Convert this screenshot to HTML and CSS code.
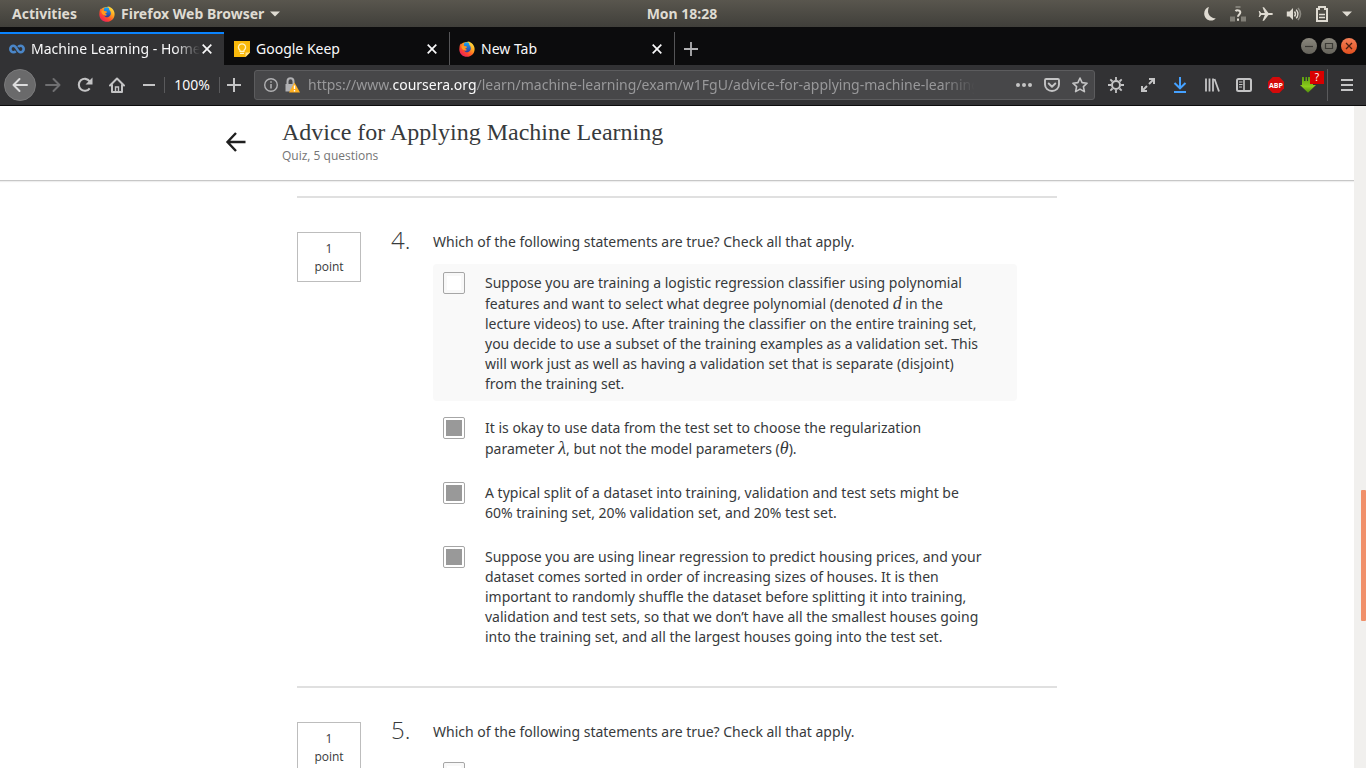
FILE: index.html
```html
<!DOCTYPE html>
<html lang="en">
<head>
<meta charset="utf-8">
<title>Machine Learning - Home</title>
<link rel="stylesheet" href="styles.css">
</head>
<body>
<svg class="defs" aria-hidden="true">
  <defs>
    <linearGradient id="fox-body" x1="0.9" y1="0" x2="0.1" y2="1">
      <stop offset="0" stop-color="#fff14d"/><stop offset="0.35" stop-color="#ffa51f"/><stop offset="0.65" stop-color="#ff4a2a"/><stop offset="1" stop-color="#e3126f"/>
    </linearGradient>
    <linearGradient id="fox-globe" x1="0" y1="0" x2="0" y2="1">
      <stop offset="0" stop-color="#18a8f5"/><stop offset="1" stop-color="#2c3b9e"/>
    </linearGradient>
    <linearGradient id="green" x1="0" y1="0" x2="0" y2="1">
      <stop offset="0" stop-color="#5c9c10"/><stop offset="0.6" stop-color="#8ccc1c"/><stop offset="1" stop-color="#4e8a0c"/>
    </linearGradient>
    <symbol id="firefox" viewBox="0 0 16 16">
      <path fill="url(#fox-body)" d="M.5 6C.7 4.300 1.300 3 2.200 2.200L2.500 3.200C3.200 2.200 4 1.700 5 1.500L10 0.600C10.600 1.200 12.600 1.700 13.800 3.200C15 4.700 15.700 6.500 15.600 8.500C15.400 12.700 12.100 15.800 8 15.800C3.800 15.800 .4 12.600 .3 8.400Z"/>
      <path fill="url(#fox-globe)" d="M5.200 2.200C7 .9 9 1.200 10 2.200C9.900 3.600 10.800 4.200 11.500 5.500C12.500 8 11.500 10.500 9 11.200C7 11.500 5.500 10.500 5 9.200C6 9.800 7.200 9.500 8 8.700C7 8.700 6.300 8 6.200 7.200L8 6.200C7.200 5.400 6.500 5 5.300 5.200C4.800 4 4.700 3 5.200 2.200Z"/>
      <path fill="#ff9a1f" d="M2.500 4.500C4 4.200 5 4.600 5.800 5.200L8 5.800C8 6.700 6.500 6.800 6.200 7.400C6.200 8.300 7.200 8.700 8 8.700C7 10 5.500 9.500 4.600 9C3 8 2 6.500 2.500 4.500Z"/>
    </symbol>
    <symbol id="close" viewBox="0 0 10 10"><path d="M.7 .7L9.300 9.300M9.300 .7L.7 9.300" stroke="currentColor" stroke-width="1.700" fill="none"/></symbol>
  </defs>
</svg>

<div class="desktop">
  <header class="panel">
    <div class="panel-left">
      <button class="panel-item">Activities</button>
      <button class="panel-item panel-app">
        <svg class="icon16"><use href="#firefox"/></svg>Firefox Web Browser
        <svg class="caret" viewBox="0 0 10 6"><path d="M0 .5h10L5 5.500z" fill="currentColor"/></svg>
      </button>
    </div>
    <time class="clock">Mon 18:28</time>
    <div class="panel-right">
      <svg class="icon16" viewBox="0 0 16 16"><path d="M7 1C4.200 1.700 2.200 4.200 2.200 7.500C2.200 11.600 5.200 14.600 9 14.600C11 14.600 12.700 13.700 13.700 12.300C9.500 12.400 6.200 9 6 5.500C6 3.700 6.300 2.200 7 1Z" fill="#dfdbd2"/></svg>
      <svg class="icon16" viewBox="0 0 16 16"><path d="M5.500 0h5v2h-5zM0 10.500h5v5H0zM11 10.500h5v5h-5z" fill="#817f77"/><path d="M5.500 5.200C6.500 3.900 10.400 4 10.300 6.500C10.300 8.500 8 8.400 8 10.800M8 12.500v2.200" stroke="#dfdbd2" stroke-width="2" fill="none"/></svg>
      <svg class="icon16" viewBox="0 0 16 16"><path d="M15 8C15 7.200 14 6.900 13 6.900H10.500L6 1.300H4.500L6.800 6.900H3.200L1.700 5H.7L1.500 8L.7 11H1.700L3.200 9.100H6.800L4.500 14.700H6L10.500 9.100H13C14 9.100 15 8.800 15 8Z" fill="#dfdbd2"/></svg>
      <svg class="icon16" viewBox="0 0 16 16"><path d="M.8 5.500h2.700L7 2v12l-3.500-3.500H.8z" fill="#dfdbd2"/><path d="M8.500 5.500q2 2.500 0 5M10.200 3.600q3.500 4.400 0 8.800" stroke="#dfdbd2" stroke-width="1.400" fill="none"/><path d="M12 2q5 6 0 12" stroke="#8a8880" stroke-width="1.600" fill="none"/></svg>
      <svg class="icon16" viewBox="0 0 16 16"><path d="M3 3h2V1h6v2h2v12H3z" stroke="#dfdbd2" stroke-width="2" fill="none"/><path d="M5 8.500h6M5 11.500h6" stroke="#dfdbd2" stroke-width="1.600"/></svg>
      <svg class="caret" viewBox="0 0 10 6"><path d="M0 .5h10L5 5.500z" fill="currentColor"/></svg>
    </div>
  </header>

  <nav class="tabs">
    <div class="tab tab-active">
      <svg class="icon16" viewBox="0 0 16 16"><path d="M6.800 10.300C6 11 5.200 11.200 4.500 11.200A3.200 3.200 0 0 1 4.500 4.800C8 4.800 8 11.200 11.500 11.200A3.200 3.200 0 1 0 11.500 4.800C10.400 4.800 9.700 5.300 9.200 6" stroke="#4a86c8" stroke-width="2.600" fill="none"/></svg>
      <span class="tab-title tab-fade">Machine Learning - Home</span>
      <button class="tab-close" aria-label="Close tab"><svg class="icon10"><use href="#close"/></svg></button>
    </div>
    <div class="tab tab-sep">
      <svg class="icon16" viewBox="0 0 16 16"><path d="M0 0h16v11.500L11.500 16H0z" fill="#f9b90b"/><path d="M16 11.500h-4.500V16z" fill="#fde08a"/><path d="M6 10.300V9.200C3 7 4.600 2.800 8 2.800S13 7 10 9.200v1.100zM6 12.300h4" stroke="#fff3c4" stroke-width="1.200" fill="none"/></svg>
      <span class="tab-title">Google Keep</span>
      <button class="tab-close" aria-label="Close tab"><svg class="icon10"><use href="#close"/></svg></button>
    </div>
    <div class="tab tab-sep">
      <svg class="icon16"><use href="#firefox"/></svg>
      <span class="tab-title">New Tab</span>
      <button class="tab-close" aria-label="Close tab"><svg class="icon10"><use href="#close"/></svg></button>
    </div>
    <button class="new-tab" aria-label="New tab"><svg class="icon14" viewBox="0 0 14 14"><path d="M7 0v14M0 7h14" stroke="currentColor" stroke-width="1.800"/></svg></button>
    <div class="window-buttons">
      <button class="win" aria-label="Minimize"><svg viewBox="0 0 16 16"><path d="M4 8.500h8" stroke="#3a3934" stroke-width="1.200"/></svg></button>
      <button class="win" aria-label="Maximize"><svg viewBox="0 0 16 16"><path d="M4.500 5.500h7v5h-7z" stroke="#3a3934" stroke-width="1.200" fill="none"/></svg></button>
      <button class="win win-close" aria-label="Close"><svg viewBox="0 0 16 16"><path d="M5 5l6 6M11 5l-6 6" stroke="#4a2012" stroke-width="1.300"/></svg></button>
    </div>
  </nav>

  <div class="toolbar">
    <button class="tool tool-back" aria-label="Back"><svg class="icon16" viewBox="0 0 16 16"><path d="M15 8H1.500M7.500 2L1.500 8l6 6" stroke="currentColor" stroke-width="2" fill="none" stroke-linecap="round" stroke-linejoin="round"/></svg></button>
    <button class="tool tool-dim" aria-label="Forward"><svg class="icon16" viewBox="0 0 16 16"><path d="M1 8h13.500M8.500 2l6 6l-6 6" stroke="currentColor" stroke-width="2" fill="none" stroke-linecap="round" stroke-linejoin="round"/></svg></button>
    <button class="tool" aria-label="Reload"><svg class="icon16" viewBox="0 0 16 16"><path d="M12.700 11.300A6 6 0 1 1 12.700 4.300" stroke="currentColor" stroke-width="2.100" fill="none"/><path d="M15.500 .5v7H8.500z" fill="currentColor"/></svg></button>
    <button class="tool" aria-label="Home"><svg class="icon16" viewBox="0 0 16 16"><path d="M1 8.500L8 1.500l7 7M3 7.500V15h10V7.500" stroke="currentColor" stroke-width="2" fill="none" stroke-linecap="round" stroke-linejoin="round"/><path d="M6.500 15v-5h3v5" stroke="currentColor" stroke-width="1.400" fill="none"/></svg></button>
    <div class="zoom">
      <button class="zoom-btn" aria-label="Zoom out"><svg class="icon14" viewBox="0 0 14 14"><path d="M1 7h12" stroke="currentColor" stroke-width="2"/></svg></button>
      <button class="zoom-value">100%</button>
      <button class="zoom-btn zoom-in" aria-label="Zoom in"><svg class="icon14" viewBox="0 0 14 14"><path d="M7 0v14M0 7h14" stroke="currentColor" stroke-width="2"/></svg></button>
    </div>
    <div class="urlbar">
      <svg class="icon16" viewBox="0 0 16 16"><circle cx="8" cy="8" r="6.300" stroke="#b1b1b3" stroke-width="1.400" fill="none"/><path d="M8 7v4.500M8 4.300v1.500" stroke="#b1b1b3" stroke-width="1.500"/></svg>
      <svg class="icon16" viewBox="0 0 16 16"><path d="M3.500 7V4.500C3.500 0.300 9.500 0.300 9.500 4.500V7" stroke="#b1b1b3" stroke-width="2" fill="none"/><path d="M1.500 7h9v7.500h-9z" fill="#b1b1b3"/><path d="M10.500 5.500L16 15.500H5z" fill="#ffb01f"/><path d="M10.500 8.500v3.500M10.500 13v1.500" stroke="#fff" stroke-width="1.400"/></svg>
      <span class="url">https://www.<b>coursera.org</b>/learn/machine-learning/exam/w1FgU/advice-for-applying-machine-learning</span>
      <button class="url-btn" aria-label="Page actions"><svg class="icon16" viewBox="0 0 16 16"><g fill="currentColor"><circle cx="2" cy="8" r="2"/><circle cx="8" cy="8" r="2"/><circle cx="14" cy="8" r="2"/></g></svg></button>
      <button class="url-btn" aria-label="Save to Pocket"><svg class="icon16" viewBox="0 0 16 16"><path d="M2.200 2h11.600Q15 2 15 3.200V7.500A7 6.500 0 0 1 1 7.500V3.200Q1 2 2.200 2zM4.700 6.500L8 9.700l3.300-3.200" stroke="currentColor" stroke-width="1.900" fill="none" stroke-linecap="round" stroke-linejoin="round"/></svg></button>
      <button class="url-btn" aria-label="Bookmark"><svg class="icon16" viewBox="0 0 16 16"><path d="M8 1l2.100 4.600 5 .6-3.700 3.400 1 5L8 12.100 3.600 14.600l1-5L.9 6.200l5-.6z" stroke="currentColor" stroke-width="1.600" fill="none" stroke-linejoin="round"/></svg></button>
    </div>
    <div class="tools-right">
      <button class="tool" aria-label="Settings"><svg class="icon16" viewBox="0 0 16 16"><circle cx="8" cy="8" r="4" stroke="currentColor" stroke-width="2" fill="none"/><path d="M8 0v3M8 13v3M0 8h3M13 8h3M2.300 2.300l2.200 2.200M11.500 11.500l2.200 2.200M13.700 2.300l-2.200 2.200M4.500 11.500l-2.200 2.200" stroke="currentColor" stroke-width="1.800"/></svg></button>
      <button class="tool" aria-label="Fullscreen"><svg class="icon16" viewBox="0 0 16 16"><path d="M9 2h5v5M14 2L9 7M7 14H2V9M2 14l5-5" stroke="currentColor" stroke-width="2" fill="none"/></svg></button>
      <button class="tool tool-blue" aria-label="Downloads"><svg class="icon16" viewBox="0 0 16 16"><path d="M8 0v11M2.500 6L8 11.300L13.500 6M2 15h12" stroke="currentColor" stroke-width="2" fill="none"/></svg></button>
      <button class="tool" aria-label="Library"><svg class="icon16" viewBox="0 0 16 16"><path d="M2 1.500v13M5.500 1.500v13M9 1.500v13M10.500 2l4.500 12.500" stroke="currentColor" stroke-width="1.800"/></svg></button>
      <button class="tool" aria-label="Sidebars"><svg class="icon16" viewBox="0 0 16 16"><rect x="1" y="2" width="14" height="12" rx="1.500" stroke="currentColor" stroke-width="2" fill="none"/><path d="M8 2v12" stroke="currentColor" stroke-width="1.600"/><path d="M3 5h3.500M3 7.500h3.500M3 10h3" stroke="currentColor" stroke-width="1"/></svg></button>
      <button class="tool" aria-label="Adblock Plus"><svg class="icon16" viewBox="0 0 16 16"><path d="M4.700 0h6.600L16 4.700v6.600L11.300 16H4.700L0 11.300V4.700z" fill="#d40a0a"/><text class="abp" x="8" y="11" text-anchor="middle">ABP</text></svg></button>
      <button class="tool tool-badged" aria-label="Video downloader"><svg class="icon16" viewBox="0 0 16 16"><path d="M2 0h2v4h1.500V0H7v4h1V0h5v8h3L8 15.800L0 8h2z" fill="url(#green)"/></svg><span class="badge">?</span></button>
    </div>
    <button class="tool tool-menu" aria-label="Open menu"><svg class="icon14" viewBox="0 0 14 14"><path d="M1 2h12M1 7h12M1 12h12" stroke="currentColor" stroke-width="2"/></svg></button>
  </div>

  <div class="viewport">
    <div class="page">
      <header class="quiz-header">
        <button class="quiz-back" aria-label="Back to course"><svg viewBox="0 0 22 22"><path d="M20.500 11H3M11 2L2.500 11L11 20" stroke="#1f1f1f" stroke-width="2.400" fill="none"/></svg></button>
        <div>
          <h1 class="quiz-title">Advice for Applying Machine Learning</h1>
          <p class="quiz-meta">Quiz, 5 questions</p>
        </div>
      </header>
      <main class="questions">
        <section class="question">
          <div class="points">1<br>point</div>
          <div class="number">4.</div>
          <div class="question-body">
            <p class="prompt">Which of the following statements are true? Check all that apply.</p>
            <label class="option option-hover"><input class="check" type="checkbox"><span class="option-text">Suppose you are training a logistic regression classifier using polynomial features and want to select what degree polynomial (denoted <i class="math">d</i> in the lecture videos) to use. After training the classifier on the entire training set, you decide to use a subset of the training examples as a validation set. This will work just as well as having a validation set that is separate (disjoint) from the training set.</span></label>
            <label class="option"><input class="check" type="checkbox" checked><span class="option-text">It is okay to use data from the test set to choose the regularization parameter <i class="math">λ</i>, but not the model parameters (<i class="math">θ</i>).</span></label>
            <label class="option"><input class="check" type="checkbox" checked><span class="option-text">A typical split of a dataset into training, validation and test sets might be 60% training set, 20% validation set, and 20% test set.</span></label>
            <label class="option"><input class="check" type="checkbox" checked><span class="option-text">Suppose you are using linear regression to predict housing prices, and your dataset comes sorted in order of increasing sizes of houses. It is then important to randomly shuffle the dataset before splitting it into training, validation and test sets, so that we don’t have all the smallest houses going into the training set, and all the largest houses going into the test set.</span></label>
          </div>
        </section>
        <section class="question">
          <div class="points">1<br>point</div>
          <div class="number">5.</div>
          <div class="question-body">
            <p class="prompt">Which of the following statements are true? Check all that apply.</p>
            <label class="option"><input class="check" type="checkbox" aria-label="First answer"></label>
          </div>
        </section>
      </main>
    </div>
    <div class="scrollbar"><div class="thumb"></div></div>
  </div>
</div>
</body>
</html>
```

FILE: styles.css
```css
* { box-sizing: border-box; }

body {
  margin: 0;
  font-family: "Open Sans", sans-serif;
  font-size: 14px;
  line-height: 20px;
  color: #373a3c;
}

button {
  display: flex;
  align-items: center;
  justify-content: center;
  margin: 0;
  padding: 0;
  border: 0;
  background: none;
  color: inherit;
  font: inherit;
}

svg { display: block; flex: none; }
.defs { position: absolute; width: 0; height: 0; }
.icon16 { width: 16px; height: 16px; }
.icon14 { width: 14px; height: 14px; }
.icon10 { width: 10px; height: 10px; }
.caret { width: 10px; height: 6px; }

.desktop {
  display: flex;
  flex-direction: column;
  height: 100vh;
  overflow: hidden;
}

/* Desktop panel */
.panel {
  display: grid;
  grid-template-columns: 1fr auto 1fr;
  align-items: center;
  flex: none;
  height: 27px;
  padding: 0 14px 0 12px;
  background: linear-gradient(#59564e, #403f3a);
  color: #dfdbd2;
  font-family: "Noto Sans", sans-serif;
  font-weight: 700;
}
.panel-left { display: flex; gap: 22px; }
.panel-app { gap: 6px; }
.panel-right { display: flex; align-items: center; justify-content: flex-end; gap: 12px; }

/* Tab strip */
.tabs {
  display: flex;
  flex: none;
  height: 38px;
  padding-top: 5px;
  background: #0c0c0d;
  color: #f9f9fa;
  font-family: "Noto Sans", sans-serif;
}
.tab {
  display: flex;
  align-items: center;
  gap: 6px;
  width: 225px;
  padding: 0 12px 0 9px;
}
.tab-active { width: 224px; margin-right: 1px; border-top: 2px solid #0a84ff; background: #323234; padding-bottom: 2px; }
.tab-sep { border-right: 1px solid #555557; }
.tab-title { flex: 1; overflow: hidden; white-space: nowrap; }
.tab-fade { margin-right: -4px; mask-image: linear-gradient(to right, #000 85%, transparent); }
.new-tab { width: 32px; color: #b1b1b3; }
.window-buttons { display: flex; align-items: center; gap: 4px; margin-left: auto; padding: 0 9px 5px 0; }
.win {
  width: 16px;
  height: 16px;
  border-radius: 50%;
  background: linear-gradient(#8a877d, #65635b);
}
.win svg { width: 16px; height: 16px; }
.win-close { background: linear-gradient(#f58057, #e2501f); }

/* Navigation toolbar */
.toolbar {
  display: flex;
  align-items: center;
  flex: none;
  height: 41px;
  padding: 0 3px 0 4px;
  border-bottom: 1px solid #0c0c0d;
  background: #323234;
  color: #c4c4c5;
  font-family: "Noto Sans", sans-serif;
}
.tool { width: 32px; height: 32px; }
.tool-back { margin-right: 1px; border: 1px solid #7a7a7b; border-radius: 50%; background: #6a6a6b; color: #dcdcdd; }
.tool-dim { color: #6f6f71; }
.tool-blue { color: #45a1ff; }
.zoom { display: flex; align-items: center; }
.zoom-btn { width: 31px; height: 32px; }
.zoom-in { width: 27px; }
.zoom-value {
  width: 56px;
  height: 16px;
  border: solid #5a5a5c;
  border-width: 0 1px;
  color: #f9f9fa;
}
.urlbar {
  display: flex;
  align-items: center;
  gap: 5px;
  flex: 1;
  min-width: 0;
  height: 30px;
  margin: 0 5px 0 7px;
  padding: 0 3px 0 8px;
  border: 1px solid #5c5c5e;
  border-radius: 3px;
  background: #474749;
  color: #c4c4c5;
}
.url {
  flex: 1;
  overflow: hidden;
  margin: 0 32px 0 3px;
  white-space: nowrap;
  color: #98989a;
  mask-image: linear-gradient(to right, #000 95%, transparent);
}
.url b { font-weight: 400; color: #f9f9fa; }
.url-btn { width: 23px; height: 28px; }
.tools-right { display: flex; padding-right: 3px; }
.abp { fill: #fff; font: bold 7px "Open Sans", sans-serif; }
.tool-badged { position: relative; }
.badge {
  position: absolute;
  top: 2px;
  right: 0;
  width: 14px;
  height: 13px;
  background: #d90000;
  color: #fff;
  font-size: 10px;
  line-height: 13px;
}
.tool-menu { width: 36px; padding-left: 2px; border-left: 1px solid #5a5a5c; }

/* Page */
.viewport { display: flex; flex: 1; min-height: 0; }
.page { flex: 1; overflow: hidden; background: #fff; }
.scrollbar {
  display: grid;
  grid-template-rows: 384fr 131fr 147fr;
  width: 12px;
  padding-left: 7px;
  background: #f1f0ee;
}
.thumb { grid-row: 2; border-radius: 1px; background: #f0906a; }

.quiz-header {
  display: flex;
  align-items: center;
  gap: 35px;
  height: 75px;
  padding: 0 0 3px 225px;
  border-bottom: 1px solid #c7c7c7;
  box-shadow: 0 1px 1px #eeeeee;
}
.quiz-back { width: 22px; height: 22px; }
.quiz-back svg { width: 22px; height: 22px; }
.quiz-title {
  margin: 0;
  font-family: "Liberation Serif", serif;
  font-size: 24px;
  font-weight: 400;
  line-height: 28px;
}
.quiz-meta { margin: 0; color: #757575; font-size: 12px; line-height: 20px; }

.questions { max-width: 760px; margin: 15px auto 0; }
.question {
  display: flex;
  padding: 34px 40px 32px 0;
  border-top: 2px solid #e0e0e0;
}
.points {
  align-self: flex-start;
  width: 64px;
  padding: 7px 0 5px;
  border: 1px solid #bdbdbd;
  font-size: 12px;
  line-height: 18px;
  text-align: center;
}
.number { width: 72px; padding-left: 30px; font-size: 24px; font-weight: 300; line-height: 16px; }
.question-body { flex: 1; font-family: "Noto Sans", sans-serif; }
.prompt { margin: 0 0 12px; }
.option {
  display: flex;
  gap: 20px;
  padding: 8px 32px 7px 10px;
  border-radius: 4px;
}
.option + .option { margin-top: 8px; }
.option-hover { background: #f9f9f9; }
.option-text { flex: 1; padding-top: 1px; }
.check {
  appearance: none;
  flex: none;
  width: 22px;
  height: 22px;
  margin: 0;
  border: 1px solid #a6a6a6;
  border-radius: 2px;
  background: #fff;
  box-shadow: inset 0 0 0 3px #f8f8f8;
}
.check:checked { padding: 2px; background: #999 content-box; box-shadow: none; }
.math { font-family: "Liberation Serif", serif; font-size: 18px; line-height: 21px; }
```
